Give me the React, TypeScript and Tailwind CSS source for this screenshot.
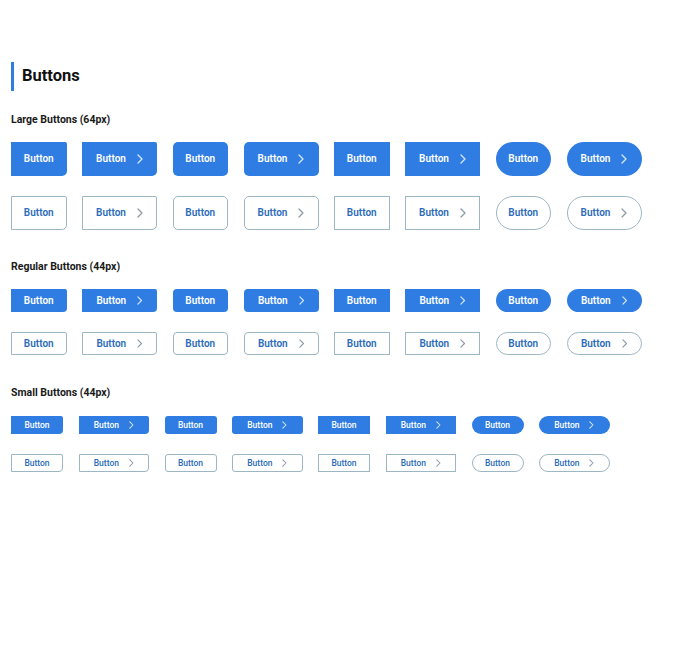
import React from 'react';

type Size = 'large' | 'regular' | 'small';
type Shape = 'tab' | 'rounded' | 'square' | 'pill';

const sizeCls: Record<Size, { h: string; text: string; w: string; wIcon: string; icon: number }> = {
  large: { h: 'h-[34px]', text: 'text-[10px] font-semibold', w: 'w-[55.5px]', wIcon: 'w-[75px]', icon: 10 },
  regular: { h: 'h-[23px]', text: 'text-[10px] font-semibold', w: 'w-[55.5px]', wIcon: 'w-[75px]', icon: 9 },
  small: { h: 'h-[18px]', text: 'text-[8.5px] font-medium', w: 'w-[52px]', wIcon: 'w-[70.5px]', icon: 8 },
};

const shapeCls: Record<Size, Record<Shape, string>> = {
  large: {
    tab: 'rounded-tr-[2px] rounded-br-[5px]',
    rounded: 'rounded-[5px]',
    square: 'rounded-none',
    pill: 'rounded-full',
  },
  regular: {
    tab: 'rounded-tr-[2px] rounded-br-[4px]',
    rounded: 'rounded-[4px]',
    square: 'rounded-none',
    pill: 'rounded-full',
  },
  small: {
    tab: 'rounded-tr-[2px] rounded-br-[4px]',
    rounded: 'rounded-[3px]',
    square: 'rounded-none',
    pill: 'rounded-full',
  },
};

function Chevron({ size, color }: { size: number; color: string }) {
  return (
    <svg width={size * 0.6} height={size} viewBox="0 0 6 10" fill="none">
      <polyline points="1,1 5,5 1,9" stroke={color} strokeWidth="1.3" strokeLinecap="round" strokeLinejoin="round" />
    </svg>
  );
}

function Btn({ size, shape, outline, icon }: { size: Size; shape: Shape; outline?: boolean; icon?: boolean }) {
  const s = sizeCls[size];
  const look = outline
    ? 'bg-white border border-[#9db6c4] text-[#2b6bb9]'
    : 'bg-[#2f7de2] text-white';
  return (
    <button
      type="button"
      className={`${s.h} ${icon ? s.wIcon : s.w} ${s.text} ${look} ${shapeCls[size][shape]} flex shrink-0 items-center justify-center ${icon ? (size === 'small' ? 'gap-[10px]' : 'gap-[11px]') : ''} leading-none`}
    >
      <span>Button</span>
      {icon && <Chevron size={s.icon} color={outline ? '#8e9ca8' : '#d6e6fb'} />}
    </button>
  );
}

const shapes: Shape[] = ['tab', 'rounded', 'square', 'pill'];

function Row({ size, outline }: { size: Size; outline?: boolean }) {
  return (
    <div className="flex gap-[15.5px]">
      {shapes.map((sh) => (
        <React.Fragment key={sh}>
          <Btn size={size} shape={sh} outline={outline} />
          <Btn size={size} shape={sh} outline={outline} icon />
        </React.Fragment>
      ))}
    </div>
  );
}

function Group({ title, size, className, labelGap }: { title: string; size: Size; className?: string; labelGap: string }) {
  return (
    <div className={className}>
      <h3 className={`text-[10.5px] leading-[14px] font-bold text-[#1a1a1a] ${labelGap}`}>{title}</h3>
      <div className="flex flex-col gap-[20px]">
        <Row size={size} />
        <Row size={size} outline />
      </div>
    </div>
  );
}

export default function App() {
  return (
    <div className="min-h-[663px] w-[700px] bg-white pl-[11px] pt-[62px]" style={{ fontFamily: 'Roboto, "Noto Sans", sans-serif' }}>
      <div className="flex items-center h-[29px] border-l-[3px] border-[#2f7de2] pl-[8px]">
        <h2 className="text-[16.5px] font-bold text-[#111] leading-none">Buttons</h2>
      </div>
      <Group title="Large Buttons (64px)" size="large" className="mt-[22px]" labelGap="mb-[15px]" />
      <Group title="Regular Buttons (44px)" size="regular" className="mt-[30px]" labelGap="mb-[15px]" />
      <Group title="Small Buttons (44px)" size="small" className="mt-[31px]" labelGap="mb-[16px]" />
    </div>
  );
}
